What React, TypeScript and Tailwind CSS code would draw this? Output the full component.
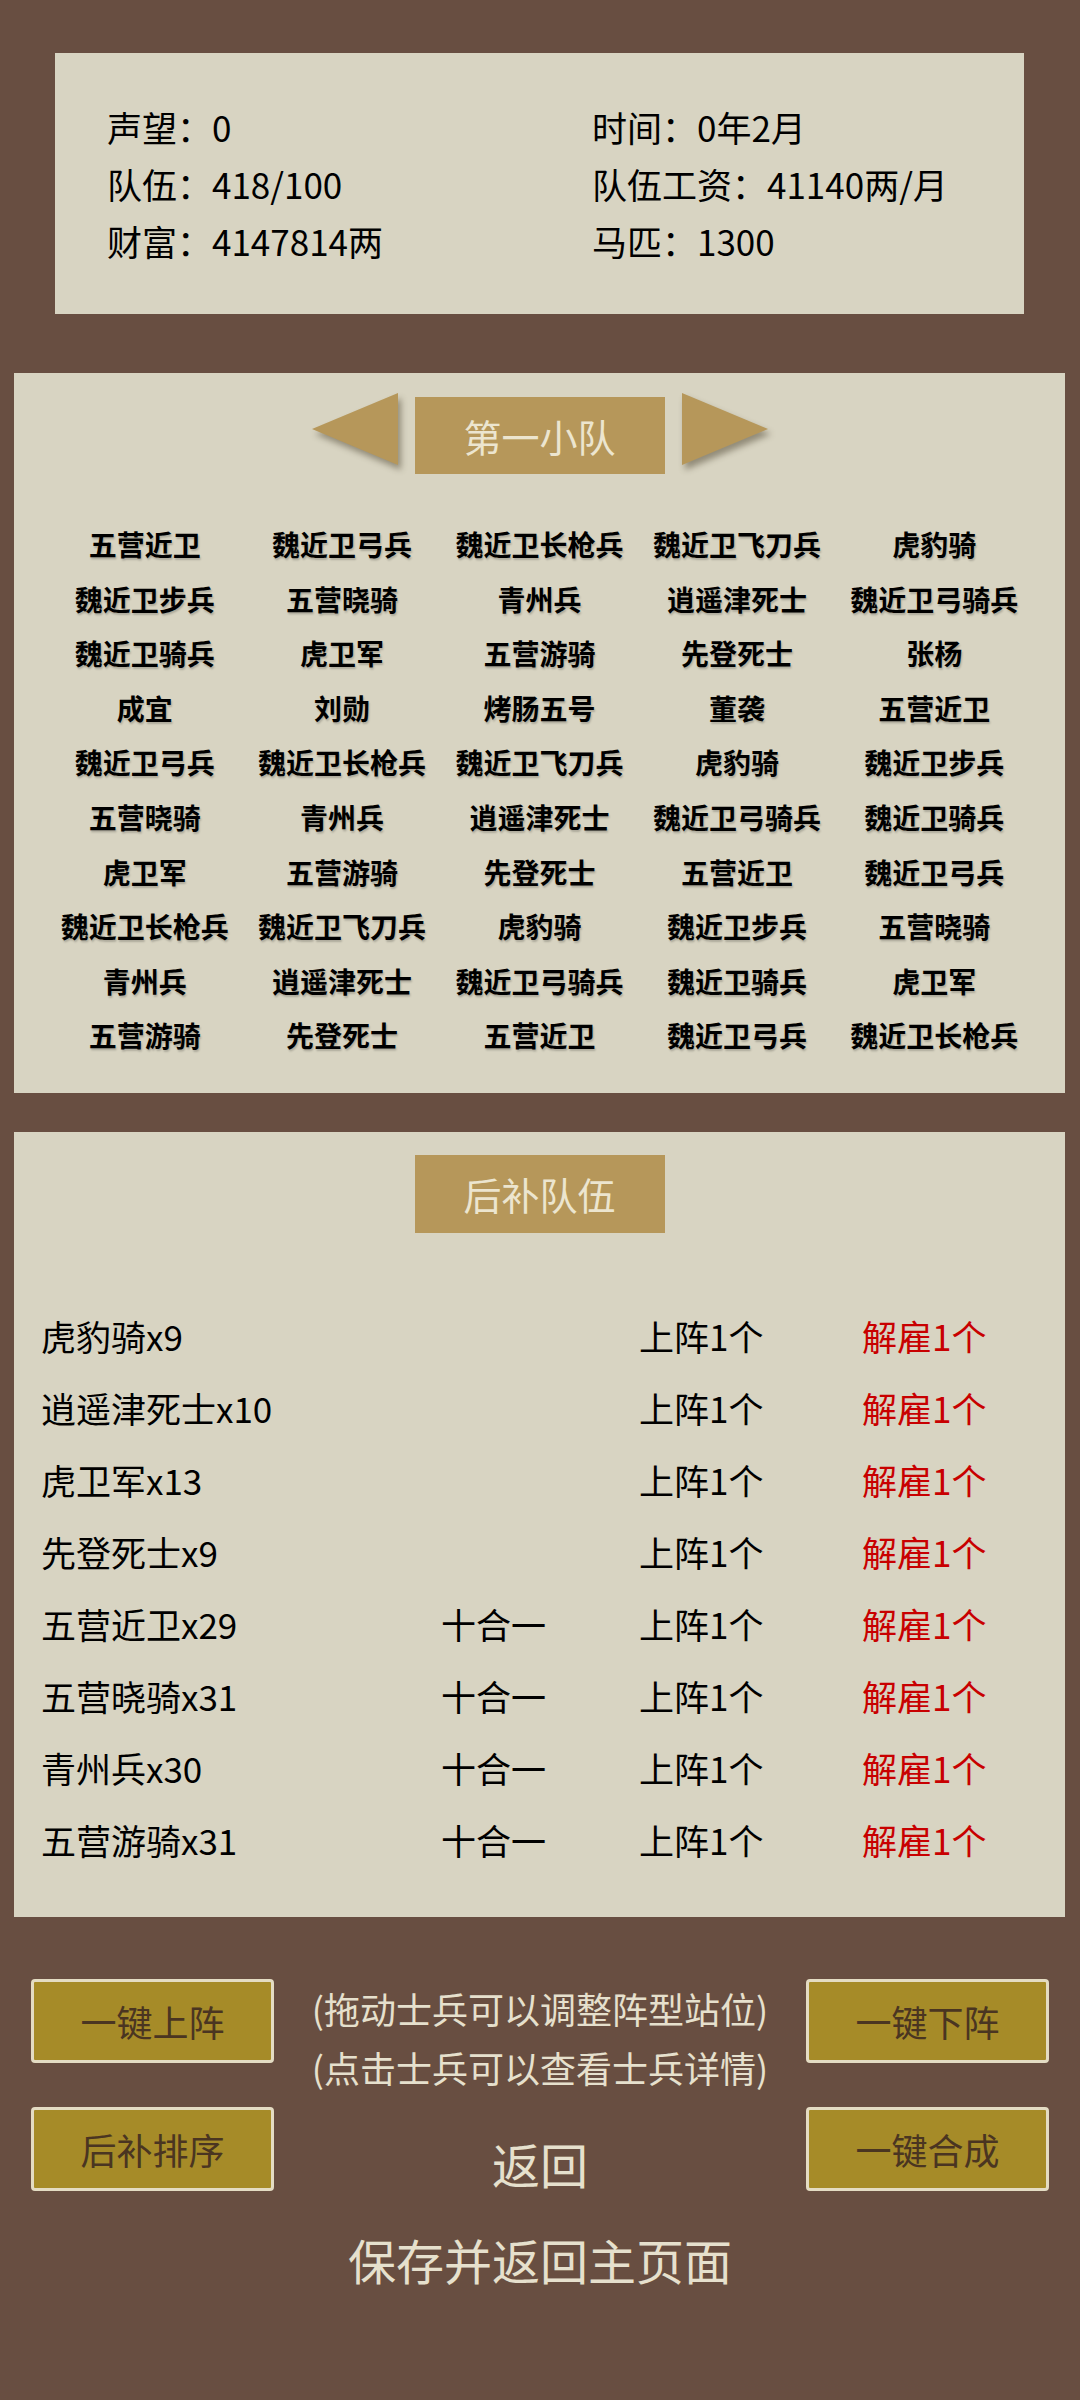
const squad: string[][] = [
  ["五营近卫", "魏近卫弓兵", "魏近卫长枪兵", "魏近卫飞刀兵", "虎豹骑"],
  ["魏近卫步兵", "五营晓骑", "青州兵", "逍遥津死士", "魏近卫弓骑兵"],
  ["魏近卫骑兵", "虎卫军", "五营游骑", "先登死士", "张杨"],
  ["成宜", "刘勋", "烤肠五号", "董袭", "五营近卫"],
  ["魏近卫弓兵", "魏近卫长枪兵", "魏近卫飞刀兵", "虎豹骑", "魏近卫步兵"],
  ["五营晓骑", "青州兵", "逍遥津死士", "魏近卫弓骑兵", "魏近卫骑兵"],
  ["虎卫军", "五营游骑", "先登死士", "五营近卫", "魏近卫弓兵"],
  ["魏近卫长枪兵", "魏近卫飞刀兵", "虎豹骑", "魏近卫步兵", "五营晓骑"],
  ["青州兵", "逍遥津死士", "魏近卫弓骑兵", "魏近卫骑兵", "虎卫军"],
  ["五营游骑", "先登死士", "五营近卫", "魏近卫弓兵", "魏近卫长枪兵"],
]

const reserve = [
  { name: "虎豹骑x9", merge: false },
  { name: "逍遥津死士x10", merge: false },
  { name: "虎卫军x13", merge: false },
  { name: "先登死士x9", merge: false },
  { name: "五营近卫x29", merge: true },
  { name: "五营晓骑x31", merge: true },
  { name: "青州兵x30", merge: true },
  { name: "五营游骑x31", merge: true },
]

function Arrow({ dir }: { dir: "left" | "right" }) {
  const points = dir === "left" ? "0,36 86,0 86,72" : "0,0 86,36 0,72"
  return (
    <svg
      width="86"
      height="72"
      viewBox="0 0 86 72"
      className="drop-shadow-[3px_5px_3px_rgba(60,50,30,0.45)]"
    >
      <polygon points={points} fill="#b6975a" />
    </svg>
  )
}

function GoldButton({ label }: { label: string }) {
  return (
    <button className="h-[84px] w-full rounded-[4px] border-[3px] border-[#e4dcc3] bg-[#a68b28] text-[36px] leading-none text-[#4a3521] flex items-center justify-center">
      {label}
    </button>
  )
}

export default function App() {
  return (
    <div className="min-h-[2400px] w-[1080px] bg-[#684e41] font-['Noto_Sans_CJK_SC','Noto_Sans',sans-serif] pt-[53px]">
      {/* status */}
      <div className="mx-[55px] w-[969px] bg-[#d8d4c2] py-[45px] pl-[52px] text-[35px] leading-[57px] text-black grid grid-cols-[485px_1fr]">
        <div>声望：0</div>
        <div>时间：0年2月</div>
        <div>队伍：418/100</div>
        <div>队伍工资：41140两/月</div>
        <div>财富：4147814两</div>
        <div>马匹：1300</div>
      </div>

      {/* squad */}
      <div className="mt-[59px] ml-[14px] w-[1051px] bg-[#d8d4c2] pt-[20px] pb-[30px] px-[32px]">
        <div className="flex justify-center items-start">
          <Arrow dir="left" />
          <div className="mt-[4px] mx-[17px] w-[250px] h-[77px] bg-[#b6975a] flex items-center justify-center text-[38px] text-[#ece5cf]">
            第一小队
          </div>
          <Arrow dir="right" />
        </div>
        <div className="mt-[43px] grid grid-cols-5">
          {squad.flat().map((n, i) => (
            <div
              key={i}
              className="h-[54.6px] leading-[54.6px] text-center text-[28px] font-bold text-black whitespace-nowrap [text-shadow:1px_2px_2px_rgba(0,0,0,0.2)]"
            >
              {n}
            </div>
          ))}
        </div>
      </div>

      {/* reserve */}
      <div className="mt-[39px] ml-[14px] w-[1051px] bg-[#d8d4c2] pt-[23px] pb-[41px]">
        <div className="flex justify-center">
          <div className="w-[250px] h-[78px] bg-[#b6975a] flex items-center justify-center text-[38px] text-[#ece5cf]">
            后补队伍
          </div>
        </div>
        <div className="mt-[67px] pl-[27px]">
          {reserve.map((r, i) => (
            <div
              key={i}
              className="grid grid-cols-[400px_198px_223px_1fr] h-[72px] leading-[72px] text-[35px] whitespace-nowrap"
            >
              <div className="text-black">{r.name}</div>
              <div className="text-black">{r.merge ? "十合一" : ""}</div>
              <div className="text-black">上阵1个</div>
              <div className="text-[#c80000]">解雇1个</div>
            </div>
          ))}
        </div>
      </div>

      {/* actions */}
      <div className="mt-[62px] px-[31px] grid grid-cols-[243px_1fr_243px]">
        <div className="flex flex-col gap-[44px]">
          <GoldButton label="一键上阵" />
          <GoldButton label="后补排序" />
        </div>
        <div className="flex flex-col items-center text-[#e6e0cd]">
          <div className="text-[36px] leading-[59px] text-center whitespace-nowrap">
            <div>(拖动士兵可以调整阵型站位)</div>
            <div>(点击士兵可以查看士兵详情)</div>
          </div>
          <div className="mt-[36px] text-[48px] leading-[60px]">返回</div>
        </div>
        <div className="flex flex-col gap-[44px]">
          <GoldButton label="一键下阵" />
          <GoldButton label="一键合成" />
        </div>
      </div>
      <div className="mt-[36px] text-center text-[48px] leading-[60px] text-[#e6e0cd]">
        保存并返回主页面
      </div>
    </div>
  )
}
